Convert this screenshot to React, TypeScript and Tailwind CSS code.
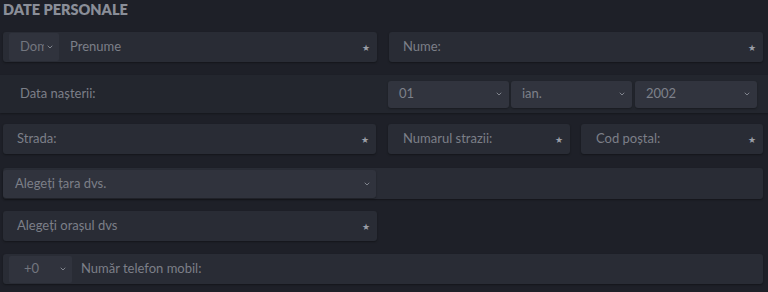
import { ChevronDown } from "lucide-react"

const font = { fontFamily: "Lato, 'Open Sans', sans-serif" }

type FieldProps = {
    label: string
    className?: string
    textPad?: string
}

const Star = () => (
    <span className="text-[9px] leading-none text-[#9a9ea7]">★</span>
)

const Chevron = () => (
    <ChevronDown size={8} strokeWidth={3} className="text-[#80848d]" />
)

const Field: React.FC<FieldProps> = ({ label, className = "", textPad = "pl-[14px]" }) => (
    <div className={`flex items-center justify-between h-[30px] rounded-[3px] bg-[#292c35] shadow-[0_1px_2px_rgba(0,0,0,0.35)] pr-[7px] ${textPad} ${className}`}>
        <span className="text-[13px] text-[#7c7f88]">{label}</span>
        <Star />
    </div>
)

const Select: React.FC<{ value: string; className?: string }> = ({ value, className = "" }) => (
    <div className={`flex items-center justify-between rounded-[3px] bg-[#31343e] shadow-[0_1px_2px_rgba(0,0,0,0.3)] pl-[11px] pr-[6px] ${className}`}>
        <span className="text-[13px] text-[#7e818a]">{value}</span>
        <Chevron />
    </div>
)

export default function App() {
    return (
        <div className="w-[768px] h-[292px] overflow-hidden bg-[#1e2028]" style={font}>
            <h1 className="pl-[3px] pt-[1px] text-[14.5px] font-extrabold leading-[18px] text-[#8a8e98]">DATE PERSONALE</h1>

            {/* nume */}
            <div className="mt-[13px] pl-[3px] pr-[5px] grid grid-cols-2 gap-x-3">
                <div className="flex items-center h-[30px] rounded-[3px] bg-[#292c35] shadow-[0_1px_2px_rgba(0,0,0,0.35)] pl-[6px] pr-[7px]">
                    <div className="flex items-center justify-between w-[50px] h-[28px] rounded-[2px] bg-[#30333d] pl-[11px] pr-[5px] overflow-hidden">
                        <span className="text-[13px] text-[#73767f] w-[24px] overflow-hidden whitespace-nowrap">Dom</span>
                        <Chevron />
                    </div>
                    <span className="ml-[11px] text-[13px] text-[#7c7f88] flex-1">Prenume</span>
                    <Star />
                </div>
                <Field label="Nume:" />
            </div>

            {/* data nasterii */}
            <div className="mt-[13px] h-[38px] bg-[#23262e] shadow-[0_1px_2px_rgba(0,0,0,0.3)] flex items-center">
                <span className="w-[389px] pl-[20px] text-[13px] text-[#7c7f88]">Data nașterii:</span>
                <div className="flex gap-[2px] pr-[11px] flex-1">
                    <Select value="01" className="h-[27px] w-[121px]" />
                    <Select value="ian." className="h-[27px] w-[121px]" />
                    <Select value="2002" className="h-[27px] w-[122px] ml-[1px]" />
                </div>
            </div>

            {/* adresa */}
            <div className="mt-[11px] pl-[3px] pr-[5px] flex gap-3">
                <Field label="Strada:" className="w-[373px]" />
                <div className="flex-1 flex gap-[11px]">
                    <Field label="Numarul strazii:" className="flex-1" textPad="pl-[15px]" />
                    <Field label="Cod poștal:" className="flex-1" textPad="pl-[15px]" />
                </div>
            </div>

            {/* tara */}
            <div className="mt-[14px] ml-[3px] mr-[5px] h-[31px] rounded-[3px] bg-[#292c35] shadow-[0_1px_2px_rgba(0,0,0,0.35)] flex items-center">
                <div className="flex items-center justify-between w-[373px] h-[28px] rounded-[3px] bg-[#30333d] shadow-[0_1px_2px_rgba(0,0,0,0.3)] pl-[12px] pr-[5px]">
                    <span className="text-[13px] text-[#7c7f88]">Alegeți țara dvs.</span>
                    <Chevron />
                </div>
            </div>

            {/* oras */}
            <div className="mt-[12px] pl-[3px] pr-[5px] grid grid-cols-2 gap-x-3">
                <Field label="Alegeți orașul dvs" />
            </div>

            {/* telefon */}
            <div className="mt-[13px] ml-[3px] mr-[5px] h-[30px] rounded-[3px] bg-[#292c35] shadow-[0_1px_2px_rgba(0,0,0,0.35)] flex items-center pl-[6px]">
                <div className="flex items-center justify-between w-[63px] h-[27px] rounded-[2px] bg-[#30333d] pl-[15px] pr-[5px]">
                    <span className="text-[13px] text-[#73767f]">+0</span>
                    <Chevron />
                </div>
                <span className="ml-[9px] text-[13px] text-[#7c7f88]">Număr telefon mobil:</span>
            </div>
        </div>
    )
}
